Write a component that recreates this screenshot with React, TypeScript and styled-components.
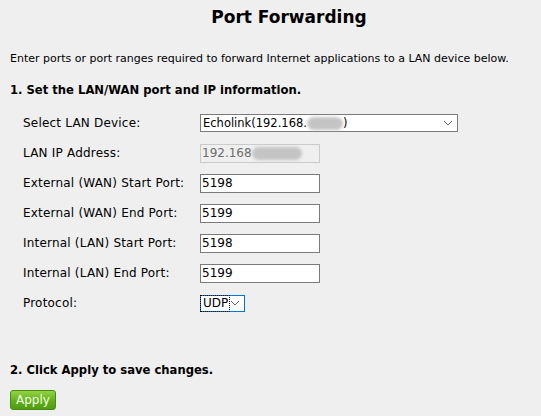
import styled, { createGlobalStyle } from "styled-components";

const GlobalStyle = createGlobalStyle`
    html, body {
        margin: 0;
        padding: 0;
        background: #efefef;
    }

    body {
        font-family: "DejaVu Sans", Verdana, sans-serif;
        font-size: 12px;
        color: #000;
    }
`

const Page = styled.div`
    width: 541px;
    height: 416px;
    overflow: hidden;
    padding: 0 0 0 10px;
    box-sizing: border-box;
`

const Title = styled.h1`
    margin: 6px 0 0 0;
    padding-left: 27px;
    text-align: center;
    font-size: 17px;
    font-weight: bold;
    line-height: 22px;
`

const Intro = styled.p`
    margin: 23px 0 0 0;
    font-size: 11px;
    line-height: 16px;
    white-space: nowrap;
`

const SectionTitle = styled.h2<{ $top: number }>`
    margin: ${(p) => p.$top}px 0 0 0;
    font-size: 11.6px;
    font-weight: bold;
    line-height: 16px;
    white-space: nowrap;
`

const Form = styled.div`
    margin-top: 10px;
    padding-left: 13px;
    display: grid;
    grid-template-columns: 177px auto;
    grid-auto-rows: 30px;
    align-items: center;
`

const Label = styled.span`
    line-height: 16px;
    letter-spacing: 0.2px;
`

const Field = styled.div`
    display: flex;
    align-items: center;
`

const TextInput = styled.div<{ $disabled?: boolean }>`
    width: 120px;
    height: 19px;
    box-sizing: border-box;
    border: 1px solid ${(p) => (p.$disabled ? "#cbcbcb" : "#7a7a7a")};
    background: ${(p) => (p.$disabled ? "#efefef" : "#fff")};
    color: ${(p) => (p.$disabled ? "#6d6d6d" : "#000")};
    padding-left: 1px;
    line-height: 17px;
    white-space: nowrap;
    overflow: hidden;
`

const Select = styled.div<{ $width: number; $focused?: boolean }>`
    width: ${(p) => p.$width}px;
    height: ${(p) => (p.$focused ? 17 : 18)}px;
    box-sizing: border-box;
    border: 1px solid ${(p) => (p.$focused ? "#0078d7" : "#7a7a7a")};
    background: #fff;
    display: flex;
    align-items: center;
    justify-content: space-between;
    padding: 0 4px 0 2px;
    white-space: nowrap;
    font-size: ${(p) => (p.$focused ? 12 : 11.5)}px;
    line-height: 15px;
`

const FocusText = styled.span`
    outline: 1px dotted #000;
    margin-left: -2px;
    padding: 0 1px 0 2px;
`

const Blur = styled.span<{ $w: number }>`
    display: inline-block;
    width: ${(p) => p.$w}px;
    height: 13px;
    vertical-align: middle;
    background: #c4c4c4;
    border-radius: 7px;
    filter: blur(1.5px);
`

const Spacer = styled.div`
    height: 44px;
`

const ApplyButton = styled.button`
    display: block;
    margin-top: 12px;
    width: 46px;
    height: 20px;
    padding: 0;
    border: 1px solid #4a8a12;
    border-radius: 3px;
    background: linear-gradient(#92d443, #62b01f 55%, #4f9b13);
    color: #f4ffe0;
    font-family: "DejaVu Sans", Verdana, sans-serif;
    font-size: 12px;
    line-height: 18px;
`

function Chevron() {
    return (
        <svg width="10" height="6" viewBox="0 0 10 6">
            <path d="M1 1 L5 5 L9 1" fill="none" stroke="#666" strokeWidth="1" />
        </svg>
    );
}

const ports = [
    { label: "External (WAN) Start Port:", value: "5198" },
    { label: "External (WAN) End Port:", value: "5199" },
    { label: "Internal (LAN) Start Port:", value: "5198" },
    { label: "Internal (LAN) End Port:", value: "5199" },
];

export default function App() {
    return (
        <Page>
            <GlobalStyle />
            <Title>Port Forwarding</Title>
            <Intro>Enter ports or port ranges required to forward Internet applications to a LAN device below.</Intro>
            <SectionTitle $top={15}>1. Set the LAN/WAN port and IP information.</SectionTitle>
            <Form>
                <Label>Select LAN Device:</Label>
                <Field>
                    <Select $width={258}>
                        <span>Echolink(192.168.<Blur $w={36} />)</span>
                        <Chevron />
                    </Select>
                </Field>
                <Label>LAN IP Address:</Label>
                <Field>
                    <TextInput $disabled>192.168<Blur $w={50} /></TextInput>
                </Field>
                {ports.map((p) => [
                    <Label key={p.label}>{p.label}</Label>,
                    <Field key={p.label + "-field"}>
                        <TextInput>{p.value}</TextInput>
                    </Field>,
                ])}
                <Label>Protocol:</Label>
                <Field>
                    <Select $width={45} $focused>
                        <FocusText>UDP</FocusText>
                        <Chevron />
                    </Select>
                </Field>
            </Form>
            <Spacer />
            <SectionTitle $top={0}>2. Click Apply to save changes.</SectionTitle>
            <ApplyButton>Apply</ApplyButton>
        </Page>
    );
}
